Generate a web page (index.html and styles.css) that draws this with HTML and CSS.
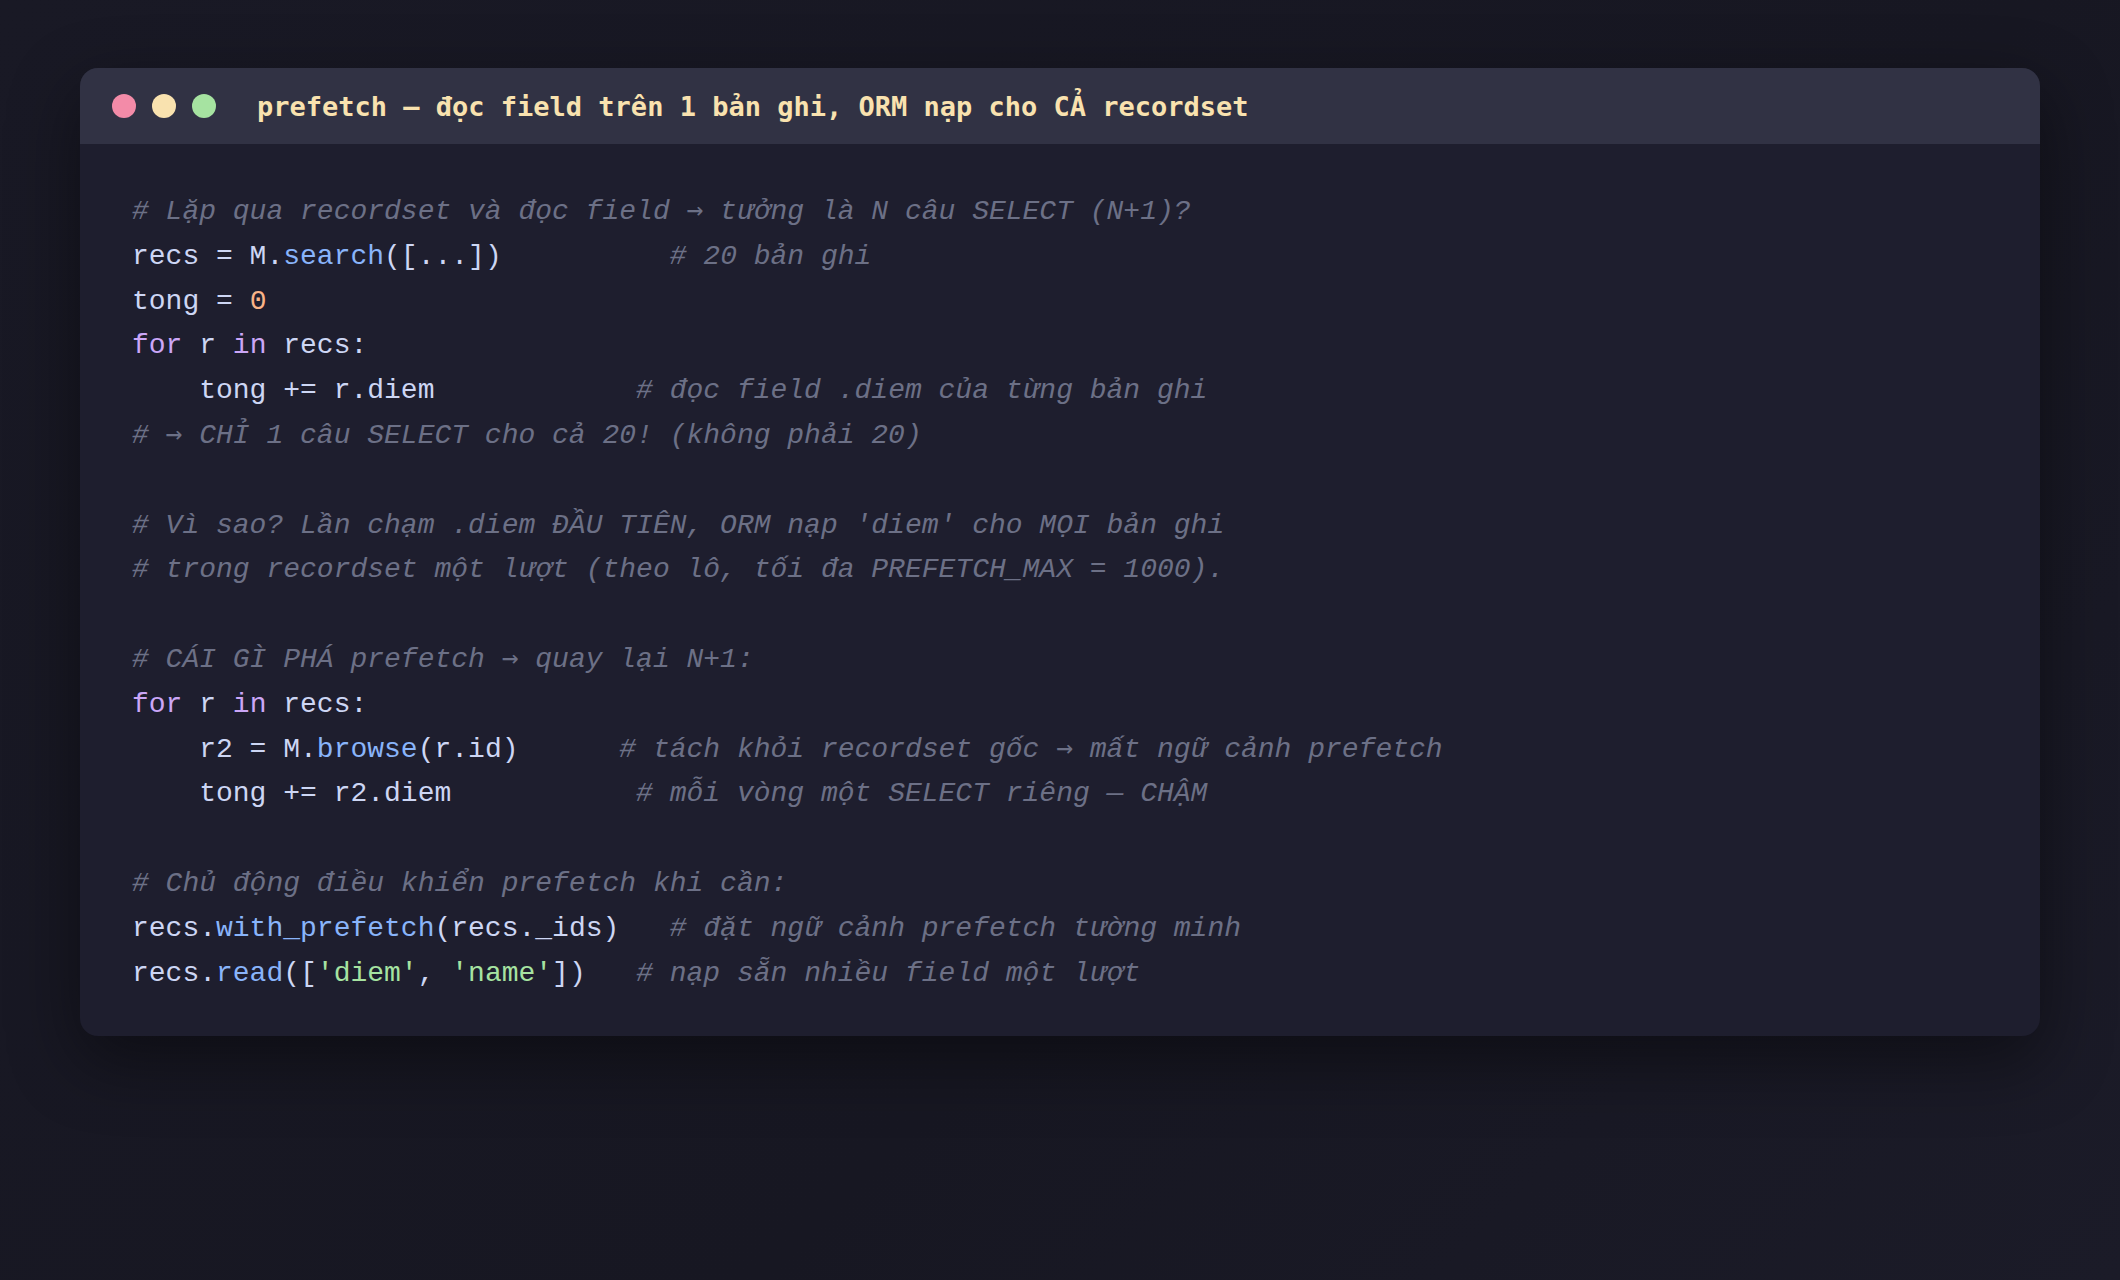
FILE: index.html
```html
<!DOCTYPE html>
<html lang="vi">
<head>
<meta charset="utf-8">
<title>prefetch</title>
<link rel="stylesheet" href="styles.css">
</head>
<body>
<div class="window">
  <div class="titlebar">
    <div class="dots">
      <span class="dot red"></span>
      <span class="dot yellow"></span>
      <span class="dot green"></span>
    </div>
    <div class="title">prefetch — đọc field trên 1 bản ghi, ORM nạp cho CẢ recordset</div>
  </div>
  <div class="code">
<div class="line"><span class="c"># Lặp qua recordset và đọc field <span class="ar">→</span> tưởng là N câu SELECT (N+1)?</span></div>
<div class="line">recs = M.<span class="f">search</span>([...])          <span class="c"># 20 bản ghi</span></div>
<div class="line">tong = <span class="n">0</span></div>
<div class="line"><span class="k">for</span> r <span class="k">in</span> recs:</div>
<div class="line">    tong += r.diem            <span class="c"># đọc field .diem của từng bản ghi</span></div>
<div class="line"><span class="c"># <span class="ar">→</span> CHỈ 1 câu SELECT cho cả 20! (không phải 20)</span></div>
<div class="line"> </div>
<div class="line"><span class="c"># Vì sao? Lần chạm .diem ĐẦU TIÊN, ORM nạp 'diem' cho MỌI bản ghi</span></div>
<div class="line"><span class="c"># trong recordset một lượt (theo lô, tối đa PREFETCH_MAX = 1000).</span></div>
<div class="line"> </div>
<div class="line"><span class="c"># CÁI GÌ PHÁ prefetch <span class="ar">→</span> quay lại N+1:</span></div>
<div class="line"><span class="k">for</span> r <span class="k">in</span> recs:</div>
<div class="line">    r2 = M.<span class="f">browse</span>(r.id)      <span class="c"># tách khỏi recordset gốc <span class="ar">→</span> mất ngữ cảnh prefetch</span></div>
<div class="line">    tong += r2.diem           <span class="c"># mỗi vòng một SELECT riêng — CHẬM</span></div>
<div class="line"> </div>
<div class="line"><span class="c"># Chủ động điều khiển prefetch khi cần:</span></div>
<div class="line">recs.<span class="f">with_prefetch</span>(recs._ids)   <span class="c"># đặt ngữ cảnh prefetch tường minh</span></div>
<div class="line">recs.<span class="f">read</span>([<span class="s">'diem'</span>, <span class="s">'name'</span>])   <span class="c"># nạp sẵn nhiều field một lượt</span></div>
  </div>
</div>
</body>
</html>
```
FILE: styles.css
```css
html, body {
  margin: 0;
  padding: 0;
}
body {
  width: 2120px;
  height: 1280px;
  background: linear-gradient(135deg, #191925 0%, #171722 60%, #1b1b28 100%);
  padding: 68px 80px 0 80px;
  box-sizing: border-box;
  font-family: "Liberation Mono", "DejaVu Sans Mono", monospace;
}
.window {
  width: 1960px;
  background: #1e1e2e;
  border-radius: 18px;
  overflow: hidden;
  box-shadow: 0 24px 70px rgba(0, 0, 0, 0.45);
}
.titlebar {
  height: 76px;
  background: #313244;
  display: flex;
  align-items: center;
  padding-left: 32px;
}
.dots {
  display: flex;
  gap: 16px;
}
.dot {
  width: 24px;
  height: 24px;
  border-radius: 50%;
  display: block;
}
.red { background: #f38ba8; }
.yellow { background: #f9e2af; }
.green { background: #a6e3a1; }
.title {
  margin-left: 41px;
  font-family: "DejaVu Sans Mono", monospace;
  font-weight: bold;
  font-size: 27px;
  color: #f9e2af;
  white-space: pre;
}
.code {
  padding: 46px 52px 40px 52px;
  font-family: "Liberation Mono", monospace;
  font-size: 28px;
  line-height: 44.8px;
  color: #cdd6f4;
}
.line {
  white-space: pre;
  height: 44.8px;
}
.c { color: #6c7086; font-style: italic; }
.ar { font-family: "DejaVu Sans Mono", monospace; font-style: normal; font-size: 27.9px; line-height: 0; }
.k { color: #cba6f7; }
.f { color: #89b4fa; }
.n { color: #fab387; }
.s { color: #a6e3a1; }
```
